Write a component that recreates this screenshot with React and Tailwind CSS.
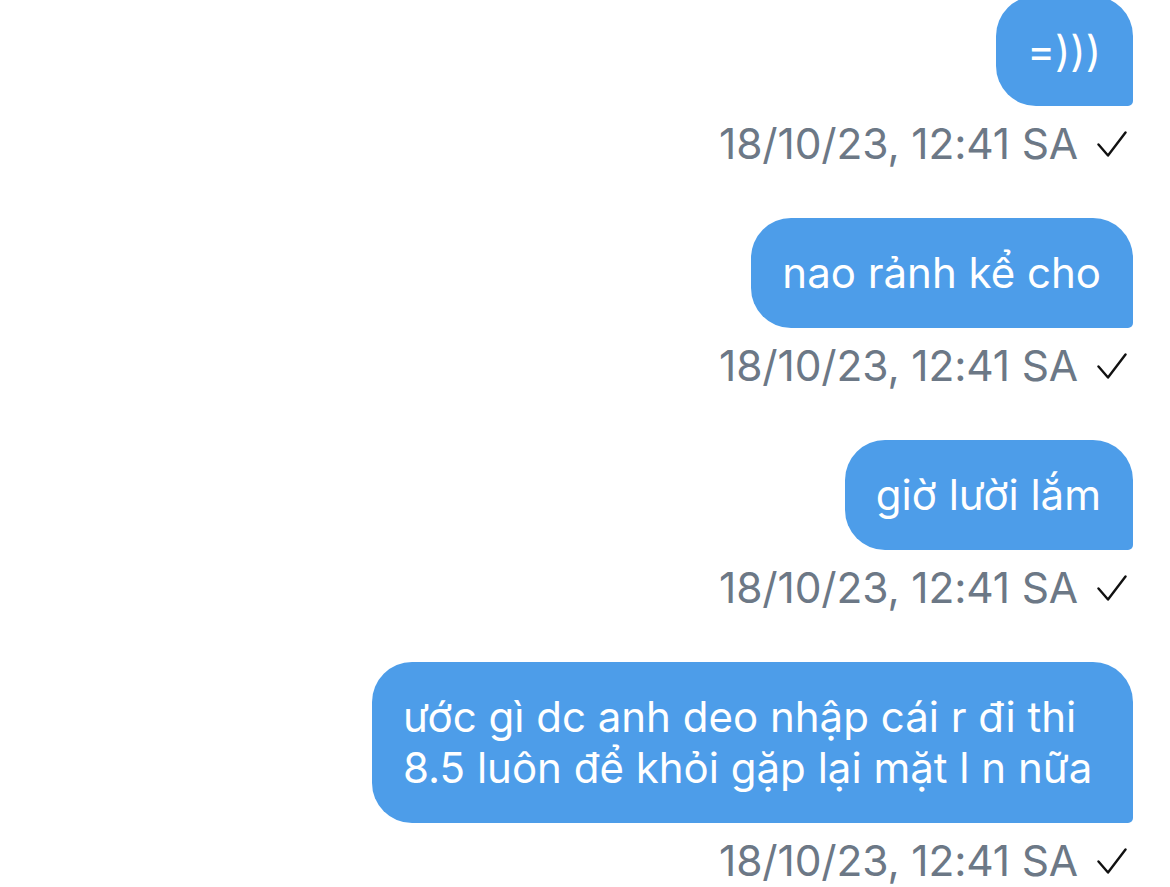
import React from 'react'

const messages = [
  { text: ['=)))'], time: '18/10/23, 12:41 SA' },
  { text: ['nao rảnh kể cho'], time: '18/10/23, 12:41 SA' },
  { text: ['giờ lười lắm'], time: '18/10/23, 12:41 SA' },
  {
    text: ['ước gì dc anh deo nhập cái r đi thi', '8.5 luôn để khỏi gặp lại mặt l n nữa'],
    time: '18/10/23, 12:41 SA',
    wide: true,
  },
]

function Check() {
  return (
    <svg width="30" height="27" viewBox="0 0 30 27" fill="none" className="shrink-0">
      <path d="M1.5 13.5 L11 24.5 L28.5 1.5" stroke="#111" strokeWidth="2.4" strokeLinecap="round" strokeLinejoin="round" />
    </svg>
  )
}

export default function App() {
  return (
    <div className="w-[1170px] h-[887px] overflow-hidden bg-white" style={{ fontFamily: 'Inter, "Noto Sans", sans-serif' }}>
      <div className="flex flex-col items-end pr-[37px] -mt-[4px]">
        {messages.map((m, i) => (
          <div key={i} className={`flex flex-col items-end ${i === 0 ? '' : 'mt-[50px]'}`}>
            <div
              className={`bg-[#4d9de9] text-white rounded-[40px] rounded-br-[5px] pl-[31px] pr-[32px] pt-[29px] pb-[30px] text-[42px] leading-[51px] ${m.wide ? 'w-[761px]' : ''}`}
            >
              {m.text.map((line, j) => (
                <div key={j}>{line}</div>
              ))}
            </div>
            <div className="mt-[14px] h-[48px] flex items-center gap-[19px] pr-[6px]">
              <span className="text-[42.5px] leading-[48px] text-[#6c7886] tracking-[-0.15px]">{m.time}</span>
              <Check />
            </div>
          </div>
        ))}
      </div>
    </div>
  )
}
